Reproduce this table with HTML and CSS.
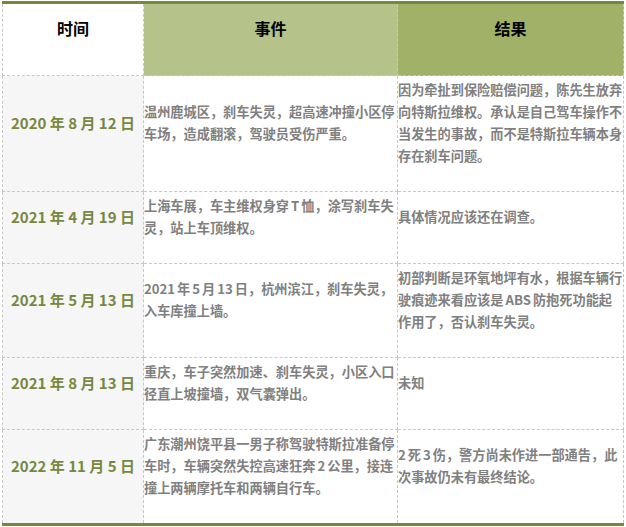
FILE: index.html
```html
<!DOCTYPE html>
<html lang="zh-CN">
<head>
<meta charset="utf-8">
<link rel="stylesheet" href="styles.css">
</head>
<body>
<div class="wrap">
<table class="tbl">
  <colgroup>
    <col class="c1"><col class="c2"><col class="c3">
  </colgroup>
  <thead>
    <tr>
      <th class="h1"><p>时间</p></th>
      <th class="h2"><p>事件</p></th>
      <th class="h3"><p>结果</p></th>
    </tr>
  </thead>
  <tbody>
    <tr>
      <td class="date"><p>2020 年 8 月 12 日</p></td>
      <td><p>温州鹿城区，刹车失灵，超高速冲撞小区停车场，造成翻滚，驾驶员受伤严重。</p></td>
      <td><p>因为牵扯到保险赔偿问题，陈先生放弃向特斯拉维权。承认是自己驾车操作不当发生的事故，而不是特斯拉车辆本身存在刹车问题。</p></td>
    </tr>
    <tr>
      <td class="date"><p>2021 年 4 月 19 日</p></td>
      <td><p>上海车展，车主维权身穿 T 恤，涂写刹车失灵，站上车顶维权。</p></td>
      <td><p>具体情况应该还在调查。</p></td>
    </tr>
    <tr>
      <td class="date"><p>2021 年 5 月 13 日</p></td>
      <td><p>2021 年 5 月 13 日，杭州滨江，刹车失灵，入车库撞上墙。</p></td>
      <td><p>初部判断是环氧地坪有水，根据车辆行驶痕迹来看应该是 ABS 防抱死功能起作用了，否认刹车失灵。</p></td>
    </tr>
    <tr>
      <td class="date"><p>2021 年 8 月 13 日</p></td>
      <td><p>重庆，车子突然加速、刹车失灵，小区入口径直上坡撞墙，双气囊弹出。</p></td>
      <td><p>未知</p></td>
    </tr>
    <tr>
      <td class="date"><p>2022 年 11 月 5 日</p></td>
      <td><p>广东潮州饶平县一男子称驾驶特斯拉准备停车时，车辆突然失控高速狂奔 2 公里，接连撞上两辆摩托车和两辆自行车。</p></td>
      <td><p>2 死 3 伤，警方尚未作进一部通告，此次事故仍未有最终结论。</p></td>
    </tr>
  </tbody>
</table>
</div>
</body>
</html>
```

FILE: styles.css
```css
html, body {
  margin: 0;
  padding: 0;
  background: #ffffff;
}

.wrap {
  padding: 1px 0 0 2px;
}

.tbl {
  width: 621px;
  border-collapse: collapse;
  table-layout: fixed;
  font-family: "Noto Sans CJK SC", "Noto Sans", sans-serif;
  border-top: 3px solid #76883f;
  border-bottom: 3px solid #76883f;
}

.c1 { width: 141px; }
.c2 { width: 254px; }
.c3 { width: 226px; }

.tbl th,
.tbl td {
  border-left: 1px dashed #c8c8c8;
  border-right: 1px dashed #c8c8c8;
  border-bottom: 1px dashed #c8c8c8;
  vertical-align: middle;
}

.tbl th {
  padding: 13px 0 14px;
  font-size: 16px;
  font-weight: 700;
  color: #000000;
  text-align: center;
}

.tbl td {
  padding: 3px 0 2px 0;
  font-size: 13.2px;
  font-weight: 700;
  color: #808080;
  text-align: left;
  word-spacing: -1px;
}

.tbl p {
  margin: 0 0 22px 0;
  line-height: 22px;
}

.h1 { background: #ffffff; }
.h2 { background: #b5c289; }
.h3 { background: #a1b168; }

.tbl td.date {
  background: #f6f6f6;
  color: #76883f;
  font-weight: 700;
  font-size: 15px;
  text-align: center;
  word-spacing: 0;
}
```
